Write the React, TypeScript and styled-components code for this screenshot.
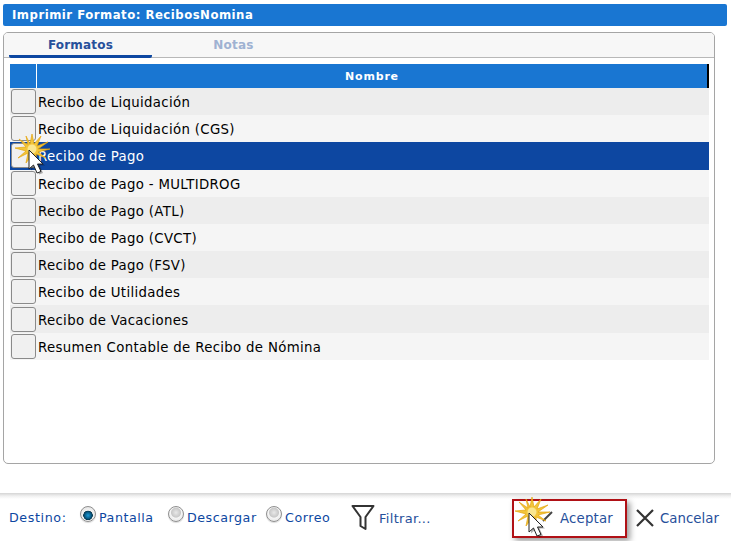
import React from "react";
import styled, { createGlobalStyle } from "styled-components";

const Global = createGlobalStyle`
  html, body { margin: 0; padding: 0; background: #fff; }
  body { font-family: "DejaVu Sans", Verdana, sans-serif; }
`;

const Page = styled.div`
  position: relative;
  width: 731px;
  height: 541px;
  overflow: hidden;
  display: flex;
  flex-direction: column;
  background: #fff;
`;

const TitleBar = styled.div`
  margin: 4px 4px 0 3px;
  height: 22px;
  padding-left: 9px;
  display: flex;
  align-items: center;
  background: #1976d2;
  border-radius: 2px;
  color: #fff;
  font-size: 11.7px;
  font-weight: bold;
  letter-spacing: 0.5px;
`;

const Panel = styled.div`
  margin: 6px 0 0 3px;
  width: 712px;
  height: 433px;
  box-sizing: border-box;
  border: 1px solid #a5a5a5;
  border-radius: 5px;
  background: #fff;
`;

const Tabs = styled.div`
  height: 24px;
  display: flex;
  background: #f7f7f7;
  border-bottom: 1px solid #b8b8b8;
  border-radius: 4px 4px 0 0;
`;

const Tab = styled.div<{ $active?: boolean }>`
  width: 143px;
  margin-left: ${(p) => (p.$active ? "5px" : "10px")};
  box-sizing: border-box;
  height: 25px;
  padding-top: 5px;
  text-align: center;
  font-size: 12px;
  font-weight: bold;
  letter-spacing: 0.2px;
  color: ${(p) => (p.$active ? "#27509b" : "#9fb2d2")};
  border-bottom: ${(p) => (p.$active ? "3px solid #0d47a1" : "none")};
  border-radius: 0 0 2px 2px;
`;

const Grid = styled.div`
  margin: 6px 5px 0 6px;
  width: 699px;
`;

const HeaderRow = styled.div`
  height: 24px;
  display: flex;
  background: #1976d2;
  border-right: 2px solid #000;
  box-sizing: border-box;
`;

const HeaderCorner = styled.div`
  width: 26px;
  border-right: 1px solid #fff;
`;

const HeaderCell = styled.div`
  flex: 1;
  display: flex;
  align-items: center;
  justify-content: center;
  padding-top: 2px;
  box-sizing: border-box;
  color: #fff;
  font-size: 11px;
  font-weight: bold;
  letter-spacing: 0.8px;
`;

const Row = styled.div<{ $selected?: boolean; $odd?: boolean }>`
  height: 27.2px;
  display: flex;
  align-items: center;
  gap: 2px;
  font-size: 13.3px;
  letter-spacing: 0.33px;
  background: ${(p) => (p.$selected ? "#0d47a1" : p.$odd ? "#ededed" : "#f5f5f5")};
  color: ${(p) => (p.$selected ? "#fff" : "#000")};
`;

const RowText = styled.span`
  padding-top: 2px;
`;

const Check = styled.div`
  margin-left: 1px;
  width: 25px;
  height: 25px;
  box-sizing: border-box;
  flex: none;
  border: 1px solid #8a8a8a;
  border-radius: 3px;
  background: #f0f0f0;
`;

const Footer = styled.div`
  margin-top: 29px;
  height: 48px;
  display: flex;
  align-items: center;
  padding: 2px 0 0 9px;
  box-sizing: border-box;
  background: linear-gradient(#d4d4d4 0, #f0f0f0 3px, #fff 6px);
  color: #0d47a1;
  font-size: 12.7px;
`;

const Label = styled.span`
  letter-spacing: 0.6px;
  width: 71px;
  flex: none;
  margin-top: -2px;
`;

const RadioItem = styled.label<{ $w: number }>`
  display: flex;
  align-items: center;
  gap: 3px;
  width: ${(p) => p.$w}px;
  flex: none;
  letter-spacing: 0.52px;
  margin-top: -2px;
`;

const Radio = styled.span<{ $on?: boolean }>`
  width: 16px;
  height: 16px;
  margin-top: -7px;
  box-sizing: border-box;
  flex: none;
  border-radius: 50%;
  border: 1px solid #8f8f8f;
  box-shadow: 0 1px 1px rgba(0, 0, 0, 0.15);
  background: ${(p) =>
    p.$on
      ? "radial-gradient(circle at 50% 60%, #1c9bd6 0, #0a5f8c 3px, #06384f 4.5px, #f2f2f2 5px, #ddd 100%)"
      : "radial-gradient(circle at 50% 40%, #e8e8e8 0, #c8c8c8 4.5px, #f5f5f5 5.5px, #ddd 100%)"};
`;

const ActionLink = styled.div`
  display: flex;
  align-items: center;
  gap: 5px;
  flex: none;
  color: #27509b;
  font-size: 13.3px;
`;

const FilterAction = styled(ActionLink)`
  width: 161px;
  gap: 4px;
  font-size: 13px;
  letter-spacing: 0.3px;
`;

const AcceptButton = styled(ActionLink)`
  position: relative;
  width: 115px;
  height: 39px;
  box-sizing: border-box;
  justify-content: flex-end;
  padding-right: 12px;
  border: 2px solid #b01116;
  box-shadow: 3px 3px 6px rgba(0, 0, 0, 0.4);
  background: #fff;
  letter-spacing: 0.2px;
`;

const CancelAction = styled(ActionLink)`
  margin-left: 9px;
  gap: 6px;
  letter-spacing: 0.05px;
`;

const CheckMark = styled.svg`
  position: absolute;
  left: 26px;
  top: 9px;
`;

const Overlay = styled.svg<{ $x: number; $y: number }>`
  position: absolute;
  left: ${(p) => p.$x}px;
  top: ${(p) => p.$y}px;
  pointer-events: none;
`;

const rows = [
  "Recibo de Liquidación",
  "Recibo de Liquidación (CGS)",
  "Recibo de Pago",
  "Recibo de Pago - MULTIDROG",
  "Recibo de Pago (ATL)",
  "Recibo de Pago (CVCT)",
  "Recibo de Pago (FSV)",
  "Recibo de Utilidades",
  "Recibo de Vacaciones",
  "Resumen Contable de Recibo de Nómina",
];

const ClickCursor = ({ x, y }: { x: number; y: number }) => (
  <Overlay $x={x} $y={y} width="40" height="44" viewBox="0 0 40 44">
    <path
      d="M17 0 L19 10 L26 2 L22 12 L33 8 L23 15 L35 15 L23 18 L31 24 L21 20 L22 30 L17 21 L11 29 L13 19 L3 24 L11 17 L0 14 L11 13 L4 5 L13 11 L11 2 L15 10 Z"
      fill="#f2c53a"
      stroke="#e5a50f"
      strokeWidth=".7"
      strokeLinejoin="round"
    />
    <circle cx="17" cy="15" r="4.5" fill="#f9e690" />
    <path d="M14 16 L14 35 L18.5 31 L22 39 L26 37.5 L22.5 30 L28 30 Z" fill="#000" opacity=".3" transform="translate(2 1.5)" />
    <path d="M14 16 L14 35 L18.5 31 L22 39 L26 37.5 L22.5 30 L28 30 Z" fill="#fff" stroke="#222" strokeWidth="1" strokeLinejoin="round" />
  </Overlay>
);

export default function App() {
  return (
    <Page>
      <Global />
      <TitleBar>Imprimir Formato: RecibosNomina</TitleBar>
      <Panel>
        <Tabs>
          <Tab $active>Formatos</Tab>
          <Tab>Notas</Tab>
        </Tabs>
        <Grid>
          <HeaderRow>
            <HeaderCorner />
            <HeaderCell>Nombre</HeaderCell>
          </HeaderRow>
          {rows.map((r, i) => (
            <Row key={r} $odd={i % 2 === 0} $selected={i === 2}>
              <Check />
              <RowText>{r}</RowText>
            </Row>
          ))}
        </Grid>
      </Panel>
      <Footer>
        <Label>Destino:</Label>
        <RadioItem $w={88}>
          <Radio $on />
          Pantalla
        </RadioItem>
        <RadioItem $w={98}>
          <Radio />
          Descargar
        </RadioItem>
        <RadioItem $w={85}>
          <Radio />
          Correo
        </RadioItem>
        <FilterAction>
          <svg width="24" height="28" viewBox="0 0 24 28" fill="none" stroke="#333" strokeWidth="2">
            <path d="M1.5 2 H22.5 L14.5 13 V25 L9.5 22 V13 Z" strokeLinejoin="round" />
          </svg>
          Filtrar...
        </FilterAction>
        <AcceptButton>
          <CheckMark width="14" height="12" viewBox="0 0 14 12" stroke="#444" strokeWidth="2" fill="none">
            <path d="M3 11 L12 2" />
          </CheckMark>
          Aceptar
        </AcceptButton>
        <CancelAction>
          <svg width="18" height="18" viewBox="0 0 18 18" stroke="#333" strokeWidth="2.2">
            <path d="M1 1 L17 17 M17 1 L1 17" />
          </svg>
          Cancelar
        </CancelAction>
      </Footer>
      <ClickCursor x={15} y={134} />
      <ClickCursor x={515} y={497} />
    </Page>
  );
}
